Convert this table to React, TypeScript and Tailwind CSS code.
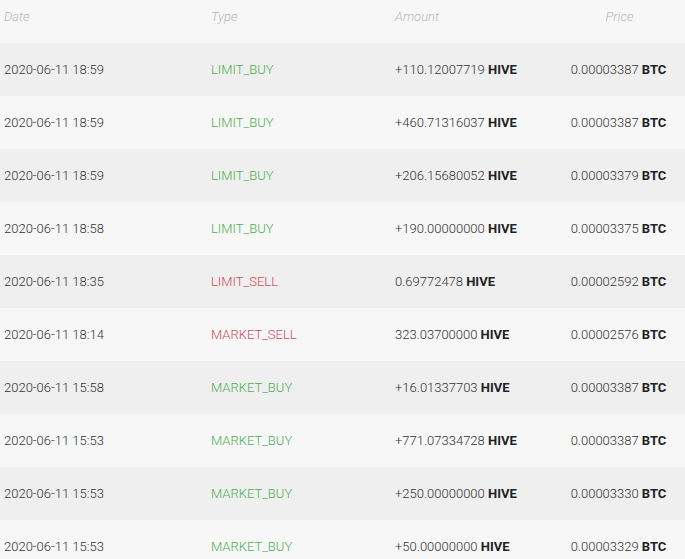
import React from 'react';

type Trade = {
    date: string;
    type: string;
    amount: string;
    price: string;
};

const trades: Trade[] = [
    { date: '2020-06-11 18:59', type: 'LIMIT_BUY', amount: '+110.12007719', price: '0.00003387' },
    { date: '2020-06-11 18:59', type: 'LIMIT_BUY', amount: '+460.71316037', price: '0.00003387' },
    { date: '2020-06-11 18:59', type: 'LIMIT_BUY', amount: '+206.15680052', price: '0.00003379' },
    { date: '2020-06-11 18:58', type: 'LIMIT_BUY', amount: '+190.00000000', price: '0.00003375' },
    { date: '2020-06-11 18:35', type: 'LIMIT_SELL', amount: '0.69772478', price: '0.00002592' },
    { date: '2020-06-11 18:14', type: 'MARKET_SELL', amount: '323.03700000', price: '0.00002576' },
    { date: '2020-06-11 15:58', type: 'MARKET_BUY', amount: '+16.01337703', price: '0.00003387' },
    { date: '2020-06-11 15:53', type: 'MARKET_BUY', amount: '+771.07334728', price: '0.00003387' },
    { date: '2020-06-11 15:53', type: 'MARKET_BUY', amount: '+250.00000000', price: '0.00003330' },
    { date: '2020-06-11 15:53', type: 'MARKET_BUY', amount: '+50.00000000', price: '0.00003329' },
];

export default function App() {
    return (
        <div className="w-[685px] h-[559px] overflow-hidden bg-[#f7f7f7] font-['Roboto',sans-serif] text-[13px] font-light text-[#333]">
            {/* en-tete */}
            <div className="grid grid-cols-[207px_184px_161px_1fr] h-[43px] items-start pt-[7px] italic text-[#b8b8b8]">
                <div className="pl-[4px]">Date</div>
                <div className="pl-[4px]">Type</div>
                <div className="pl-[4px]">Amount</div>
                <div className="text-center pl-[2px]">Price</div>
            </div>

            {trades.map((t, i) => (
                <div
                    key={i}
                    className={`grid grid-cols-[207px_184px_161px_1fr] h-[53px] items-center ${i % 2 === 0 ? 'bg-[#efefef]' : 'bg-[#f7f7f7]'}`}
                >
                    <div className="pl-[4px]">{t.date}</div>
                    <div className={`pl-[4px] ${t.type.endsWith('SELL') ? 'text-[#d14b5c]' : 'text-[#4caf50]'}`}>
                        {t.type}
                    </div>
                    <div className="pl-[4px]">
                        {t.amount} <span className="font-bold text-[#222]">HIVE</span>
                    </div>
                    <div className="text-center">
                        {t.price} <span className="font-bold text-[#222]">BTC</span>
                    </div>
                </div>
            ))}
        </div>
    );
}
